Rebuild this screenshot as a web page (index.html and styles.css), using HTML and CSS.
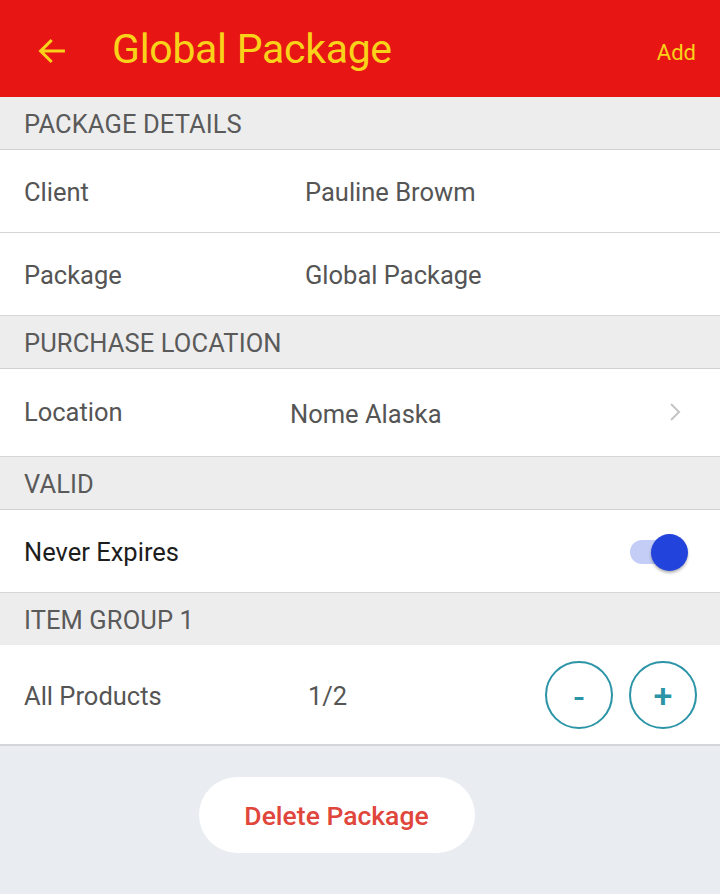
FILE: index.html
```html
<!DOCTYPE html>
<html>
<head>
<meta charset="utf-8">
<link rel="stylesheet" href="styles.css">
</head>
<body>
<div class="app">
  <header class="topbar">
    <svg class="back" width="34" height="34" viewBox="0 0 24 24"><path d="M20 12H5M11 5l-7 7 7 7" fill="none" stroke="#f9d21a" stroke-width="2.2" stroke-linecap="square"/></svg>
    <h1 class="title">Global Package</h1>
    <span class="add">Add</span>
  </header>

  <div class="section">PACKAGE DETAILS</div>
  <div class="row">
    <span class="label">Client</span>
    <span class="value">Pauline Browm</span>
  </div>
  <div class="row">
    <span class="label">Package</span>
    <span class="value">Global Package</span>
  </div>

  <div class="section">PURCHASE LOCATION</div>
  <div class="row row-tall">
    <span class="label">Location</span>
    <span class="value value-loc">Nome Alaska</span>
    <svg class="chev" width="14" height="22" viewBox="0 0 14 22"><path d="M3 3l8 8-8 8" fill="none" stroke="#c4c4c4" stroke-width="2"/></svg>
  </div>

  <div class="section">VALID</div>
  <div class="row">
    <span class="label label-dark">Never Expires</span>
    <span class="toggle"><span class="track"></span><span class="knob"></span></span>
  </div>

  <div class="section section-noline">ITEM GROUP 1</div>
  <div class="row row-items">
    <span class="label">All Products</span>
    <span class="value value-count">1/2</span>
    <div class="steppers">
      <button class="step step-minus">-</button>
      <button class="step">+</button>
    </div>
  </div>

  <div class="footer">
    <button class="delete">Delete Package</button>
  </div>
</div>
</body>
</html>
```

FILE: styles.css
```css
* { box-sizing: border-box; }
html, body { margin: 0; padding: 0; }
body {
  font-family: Roboto, "Noto Sans", sans-serif;
  background: #e9ecf0;
  width: 720px;
  height: 894px;
  overflow: hidden;
}
.app { display: flex; flex-direction: column; height: 894px; }

.topbar {
  height: 97px;
  background: #e81515;
  display: flex;
  align-items: center;
  padding: 0 24px 0 35px;
}
.back { flex: none; margin-top: 4px; }
.title {
  margin: 0 0 0 43px;
  font-weight: 400;
  font-size: 41px;
  color: #f9d21a;
  flex: 1;
  letter-spacing: -0.3px;
}
.add { color: #f9d21a; font-size: 22px; margin-top: 8px; }

.section {
  height: 53px;
  background: #ededed;
  border-bottom: 1px solid #d2d2d2;
  display: flex;
  align-items: center;
  padding: 2px 24px 0;
  font-size: 25.5px;
  color: #5a5a5a;
  letter-spacing: 0.1px;
}
.section-noline { border-bottom: none; height: 52px; }

.row {
  height: 83px;
  background: #fff;
  border-bottom: 1px solid #d6d6d6;
  display: flex;
  align-items: center;
  padding: 2px 24px 0;
  font-size: 25.5px;
  color: #555;
}
.row-tall { height: 88px; padding-bottom: 4px; }
.label { width: 281px; flex: none; }
.label-dark { color: #1d1d1d; flex: 1; }
.value { flex: 1; }
.value-loc { margin-left: -15px; padding-top: 4px; }
.chev { flex: none; margin-right: 14px; }

.toggle { position: relative; width: 64px; height: 40px; flex: none; margin-right: 4px; }
.track {
  position: absolute; left: 2px; top: 8px;
  width: 44px; height: 24px; border-radius: 12px;
  background: #c4cdf5;
}
.knob {
  position: absolute; right: 4px; top: 2px;
  width: 37px; height: 37px; border-radius: 50%;
  background: #2344dc;
  box-shadow: 0 2px 3px rgba(0,0,0,0.3);
}

.row-items { height: 101px; border-bottom: 2px solid #d3d5d8; }
.value-count { padding-left: 3px; }
.steppers { display: flex; gap: 16px; margin-right: -1px; margin-top: -2px; }
.step {
  width: 68px; height: 68px;
  border-radius: 50%;
  border: 2px solid #2b94a6;
  background: #fff;
  color: #2b94a6;
  font-family: Roboto, sans-serif;
  font-size: 34px;
  font-weight: 500;
  padding: 0;
  display: flex; align-items: center; justify-content: center;
}
.step-minus { padding-top: 4px; }

.footer {
  flex: 1;
  display: flex;
  justify-content: center;
  padding-top: 31px;
  padding-right: 47px;
}
.delete {
  width: 276px; height: 76px;
  border-radius: 38px;
  border: none;
  background: #fff;
  color: #e0463b;
  font-family: Roboto, sans-serif;
  font-size: 26.5px;
  font-weight: 500;
}
```
